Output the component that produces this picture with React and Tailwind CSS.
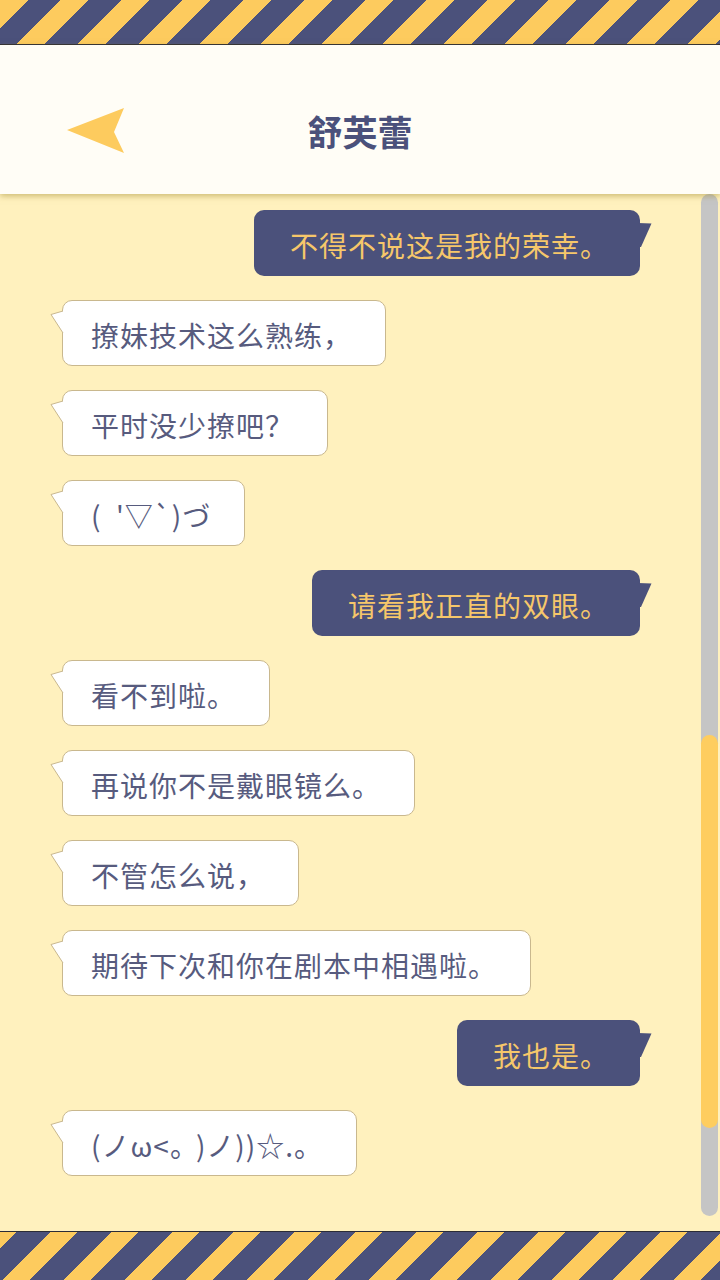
import React from "react";

const messages = [
  { me: true, text: "不得不说这是我的荣幸。" },
  { me: false, text: "撩妹技术这么熟练，" },
  { me: false, text: "平时没少撩吧？" },
  { me: false, text: "(  '▽`)づ" },
  { me: true, text: "请看我正直的双眼。" },
  { me: false, text: "看不到啦。" },
  { me: false, text: "再说你不是戴眼镜么。" },
  { me: false, text: "不管怎么说，" },
  { me: false, text: "期待下次和你在剧本中相遇啦。" },
  { me: true, text: "我也是。" },
  {
    me: false,
    text: (
      <>
        (ノω&lt;。<span className="ml-[11px]">)ノ))☆.。</span>
      </>
    ),
  },
];

function Bubble({ me, text }) {
  if (me) {
    return (
      <div className="relative self-end h-[66px] flex items-center rounded-[10px] bg-[#4b517b] pl-[36px] pr-[31px] pt-[3px] text-[#f6c76a] text-[28px] tracking-[1px] whitespace-pre">
        <span className="leading-none">{text}</span>
        <svg className="absolute right-[-12px] top-[12px]" width="14" height="26" viewBox="0 0 14 26">
          <polygon points="0,1 13.5,1.5 3,25 0,25" fill="#4b517b" />
        </svg>
      </div>
    );
  }
  return (
    <div className="relative self-start h-[66px] flex items-center rounded-[10px] border border-[#c9b88e] bg-white pl-[28px] pr-[33px] pt-[3px] text-[#575b7e] text-[28px] tracking-[1px] whitespace-pre">
      <span className="leading-none">{text}</span>
      <svg className="absolute left-[-13px] top-[9px]" width="16" height="25" viewBox="0 0 16 25">
        <polygon points="1,4.5 13,1 16,1 16,23 13,23" fill="#ffffff" />
        <polyline points="13,1 1,4.5 13,23" fill="none" stroke="#c9b88e" strokeWidth="1" />
      </svg>
    </div>
  );
}

export default function App() {
  return (
    <div className="w-[720px] h-[1280px] flex flex-col overflow-hidden bg-[#fff1be] font-['Noto_Sans_CJK_SC','Noto_Sans',sans-serif]">
      <div className="h-[45px] shrink-0 border-b border-[#2b2b36] bg-[repeating-linear-gradient(135deg,#fdcb5e_0px,#fdcb5e_19.8px,#4b517b_19.8px,#4b517b_43.13px)]" />
      <div className="relative z-10 h-[149px] shrink-0 bg-[#fffdf6] shadow-[0_2px_6px_rgba(160,140,50,0.55)] grid grid-cols-[1fr_auto_1fr] items-center pt-[22px]">
        <div className="pl-[67px] flex items-center">
          <svg width="58" height="46" viewBox="0 0 58 46">
            <polygon points="0,22 57,0 47,24 57,45" fill="#fdcb5e" />
          </svg>
        </div>
        <div className="text-[35px] font-bold text-[#4b517b] leading-none">舒芙蕾</div>
        <div />
      </div>
      <div className="flex-1 flex min-h-0">
        <div className="flex-1 flex flex-col gap-[24px] pt-[16px] pl-[62px] pr-[61px]">
          {messages.map((m, i) => (
            <Bubble key={i} me={m.me} text={m.text} />
          ))}
        </div>
        <div className="w-[17px] mr-[2px] mb-[15px] rounded-full bg-[#c5c5c5] flex flex-col">
          <div className="mt-[541px] h-[393px] rounded-full bg-[#fecd5f]" />
        </div>
      </div>
      <div className="h-[49px] shrink-0 border-t border-[#2b2b36] bg-[repeating-linear-gradient(135deg,#fdcb5e_0px,#fdcb5e_12px,#4b517b_12px,#4b517b_35.4px,#fdcb5e_35.4px,#fdcb5e_43.13px)]" />
    </div>
  );
}
